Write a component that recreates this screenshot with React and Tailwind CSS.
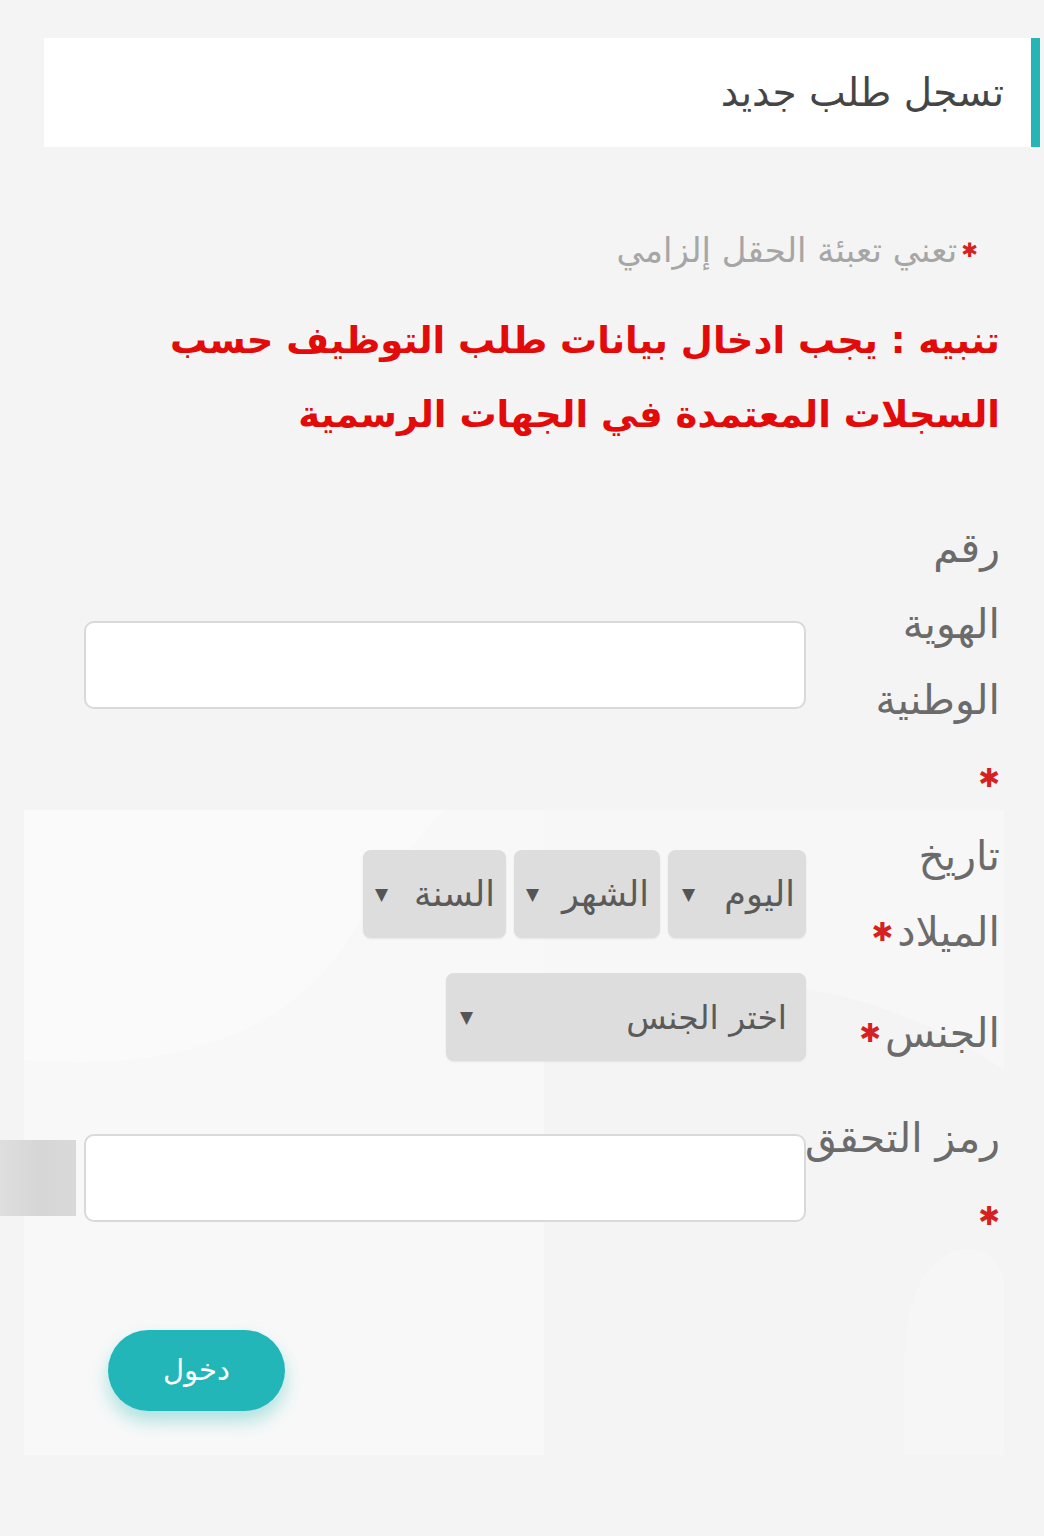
import React from "react";

const font = "font-['DejaVu_Sans','Noto_Sans',sans-serif]";

function Star({ className = "" }) {
  return <span className={`text-[#d42222] leading-none ${className}`}>✱</span>;
}

function SelectBox({ label, className, textSize = "text-[35px]" }) {
  return (
    <div className={`flex h-[88px] items-center justify-between rounded-[8px] bg-[#dddddd] shadow-[0_1px_2px_rgba(0,0,0,0.08)] ${className}`}>
      <span className={`${textSize} leading-none text-[#5a5a5a]`}>{label}</span>
      <span className="text-[17px] leading-none text-[#555]">▼</span>
    </div>
  );
}

export default function App() {
  return (
    <div dir="rtl" className={`min-h-[1536px] w-[1044px] bg-[#f4f4f4] pt-[38px] ${font}`}>
      {/* header card */}
      <div className="ml-[44px] mr-[4px] flex h-[109px] items-center border-r-[9px] border-[#25b5b5] bg-white pr-[27px]">
        <h1 className="text-[39px] font-normal leading-none text-[#454545]">تسجل طلب جديد</h1>
      </div>

      {/* required note */}
      <div className="mr-[66px] mt-[83px] flex h-[40px] items-center gap-[4px]">
        <Star className="text-[20px]" />
        <span className="text-[34px] leading-none text-[#a6a6a6]">تعني تعبئة الحقل إلزامي</span>
      </div>

      {/* warning */}
      <p className="mr-[44px] mt-[34px] text-[37px] font-bold leading-[74px] text-[#e30a0a]">
        تنبيه : يجب ادخال بيانات طلب التوظيف حسب
        <br />
        السجلات المعتمدة في الجهات الرسمية
      </p>

      {/* row 1: national id */}
      <div className="mr-[44px] mt-[58px] flex items-center">
        <div className="w-[194px] shrink-0 text-[41px] leading-[76px] text-[#6b6b6b]">
          <div>رقم</div>
          <div>الهوية</div>
          <div>الوطنية</div>
          <div className="flex h-[82px] items-center pb-[2px]"><Star className="text-[26px]" /></div>
        </div>
        <div className="h-[88px] w-[722px] rounded-[10px] border-2 border-[#d9d9d9] bg-white" />
        <div className="w-[84px]" />
      </div>

      {/* panel */}
      <div className="relative ml-[24px] mr-[40px] -mt-[10px] bg-[#f7f7f7] pb-[44px] pt-[8px]">
        <svg className="pointer-events-none absolute inset-0 h-full w-full" viewBox="0 0 980 645" preserveAspectRatio="none">
          <path d="M0 0 H520 V645 H0 Z" fill="#f8f8f8" />
          <path d="M520 240 C640 150 820 150 980 260 V645 H520 Z" fill="#f4f4f4" />
          <path d="M880 645 C880 560 870 460 935 440 C960 435 975 450 980 470 V645 Z" fill="#f6f6f6" />
          <path d="M0 250 C120 260 260 240 330 120 C360 70 400 20 420 0 H0 Z" fill="#fafafa" />
        </svg>

        <div className="relative pr-[4px]">
          {/* row 2: birth date */}
          <div className="flex items-center">
            <div className="w-[194px] shrink-0 text-[41px] leading-[76px] text-[#6b6b6b]">
              <div>تاريخ</div>
              <div className="flex items-center gap-[4px]">الميلاد<Star className="text-[26px]" /></div>
            </div>
            <div className="flex w-[722px] gap-[8px]">
              <SelectBox label="اليوم" className="w-[138px] pl-[14px] pr-[11px]" />
              <SelectBox label="الشهر" className="w-[146px] pl-[12px] pr-[11px]" />
              <SelectBox label="السنة" className="w-[143px] pl-[12px] pr-[11px]" />
            </div>
          </div>

          {/* row 3: gender */}
          <div className="flex items-start">
            <div className="mt-[25px] flex w-[194px] shrink-0 items-center gap-[4px] text-[41px] leading-[76px] text-[#6b6b6b]">
              الجنس<Star className="text-[26px]" />
            </div>
            <div className="mt-[3px] w-[722px]">
              <SelectBox label="اختر الجنس" textSize="text-[33px]" className="w-[360px] pl-[14px] pr-[19px]" />
            </div>
          </div>

          {/* row 4: captcha */}
          <div className="mt-[29px] flex items-center">
            <div className="w-[194px] shrink-0 text-[41px] leading-[76px] text-[#6b6b6b]">
              <div className="whitespace-nowrap">رمز التحقق</div>
              <div className="flex h-[80px] items-center"><Star className="text-[26px]" /></div>
            </div>
            <div className="h-[88px] w-[722px] shrink-0 rounded-[10px] border-2 border-[#d9d9d9] bg-white" />
            <div className="mr-[8px] -ml-[24px] h-[76px] w-[76px] shrink-0 bg-gradient-to-r from-[#dedede] via-[#d6d6d6] to-[#d9d9d9]" />
          </div>

          {/* submit */}
          <div className="mt-[74px] flex justify-end pl-[84px]">
            <button className="h-[81px] w-[177px] rounded-full bg-[#22b6b8] text-[29px] text-white shadow-[0_10px_18px_rgba(34,182,184,0.35)]">
              دخول
            </button>
          </div>
        </div>
      </div>
    </div>
  );
}
